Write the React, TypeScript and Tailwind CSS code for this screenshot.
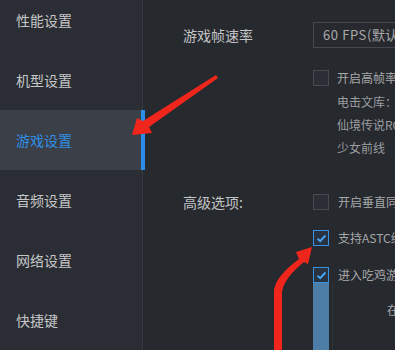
import React from "react";

const font = { fontFamily: '"Noto Sans CJK SC", "Noto Sans", sans-serif' };

function Box({ checked }: { checked?: boolean }) {
  return checked ? (
    <div className="w-[16px] h-[16px] shrink-0 border border-[#3790e0] bg-[#283241] flex items-center justify-center">
      <svg width="11" height="9" viewBox="0 0 11 9">
        <path d="M1.5 4.8 L4.2 7.2 L9.5 1.5" fill="none" stroke="#46a2ee" strokeWidth="2" />
      </svg>
    </div>
  ) : (
    <div className="w-[16px] h-[16px] shrink-0 border border-[#464950] bg-[#2b2e34]" />
  );
}

export default function App() {
  const nav = ["性能设置", "机型设置", "游戏设置", "音频设置", "网络设置", "快捷键"];
  return (
    <div className="relative w-[395px] h-[350px] overflow-hidden bg-[#26292e] flex" style={font}>
      <div className="w-[143px] h-full shrink-0 bg-[#2a2d33] border-r border-[#363940]">
        <div className="-mt-[10px] flex flex-col">
          {nav.map((n, i) => (
            <div
              key={n}
              className={
                i === 2
                  ? "relative h-[60px] flex items-center pl-[16px] text-[14px] text-[#2f8ee6] bg-[#3b3f47]"
                  : "h-[60px] flex items-center pl-[16px] text-[14px] text-[#c6c7c9]"
              }
            >
              {n}
              {i === 2 && <div className="absolute right-[-3px] top-0 h-full w-[4px] bg-[#2a8ee8]" />}
            </div>
          ))}
        </div>
      </div>
      <div className="flex-1 min-w-0 pl-[40px] pt-[22px] whitespace-nowrap">
        <div className="flex items-center h-[26px]">
          <div className="w-[130px] shrink-0 text-[14px] text-[#c3c4c6]">游戏帧速率</div>
          <div className="h-[26px] w-[160px] shrink-0 border border-[#44474e] bg-[#27292e] flex items-center pl-[9px] text-[13px] text-[#a9aaac]">
            <span className="tracking-[0.6px]">60 FPS(</span>默认配置)
          </div>
        </div>
        <div className="flex items-start mt-[22px]">
          <div className="w-[130px] shrink-0" />
          <div className="flex flex-col">
            <div className="flex items-center gap-[8px] h-[16px]">
              <Box />
              <span className="text-[12px] text-[#a7a8aa]">开启高帧率（部分游戏支持）</span>
            </div>
            <div className="pl-[24px] flex flex-col text-[12px] text-[#9c9da0] leading-[23px] mt-[4px]">
              <span>电击文库：零境交错</span>
              <span>仙境传说RO：守护永恒的爱</span>
              <span>少女前线</span>
            </div>
          </div>
        </div>
        <div className="flex items-start mt-[35px]">
          <div className="w-[130px] shrink-0 text-[14px] text-[#c3c4c6] h-[16px] flex items-center">高级选项:</div>
          <div className="flex flex-col">
            <div className="flex items-center gap-[9px] h-[16px]">
              <Box />
              <span className="text-[12px] text-[#a7a8aa]">开启垂直同步</span>
            </div>
            <div className="flex items-center gap-[9px] h-[16px] mt-[20px]">
              <Box checked />
              <span className="text-[12px] text-[#a7a8aa]">支持ASTC纹理</span>
            </div>
            <div className="flex items-center gap-[9px] h-[16px] mt-[21px]">
              <Box checked />
              <span className="text-[12px] text-[#a7a8aa]">进入吃鸡游戏时自动优化</span>
            </div>
            <div className="flex">
              <div className="w-[16px] h-[80px] bg-[#4d7ea8]" />
              <div className="ml-[3px] w-px h-[80px] bg-[#30333a]" />
              <div className="ml-[54px] mt-[18px] text-[12px] text-[#a7a8aa]">在</div>
            </div>
          </div>
        </div>
      </div>
      <svg className="absolute inset-0 pointer-events-none" width="395" height="350" viewBox="0 0 395 350">
        <polygon
          points="132,135 137,118 143,121 216,75 218,78 149,127 152,133"
          fill="#f0261c"
        />
        <path
          d="M274,350 L274,290 Q276,276 299,259 L296,252 L312,247 L308,264 L304,262 Q284,278 282,292 L282,350 Z"
          fill="#f0261c"
        />
      </svg>
    </div>
  );
}
